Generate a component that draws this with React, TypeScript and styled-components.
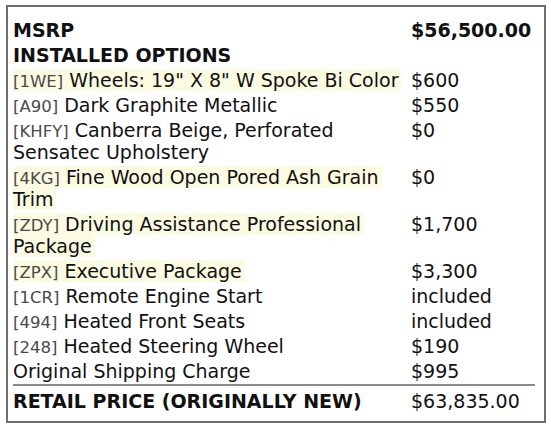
import React from 'react';
import styled, { createGlobalStyle } from 'styled-components';

interface OptionLine {
  code?: string;
  label: string;
  price: string;
  flagged?: boolean;
}

const options: OptionLine[] = [
  { code: '1WE', label: 'Wheels: 19" X 8" W Spoke Bi Color', price: '$600', flagged: true },
  { code: 'A90', label: 'Dark Graphite Metallic', price: '$550' },
  { code: 'KHFY', label: 'Canberra Beige, Perforated Sensatec Upholstery', price: '$0' },
  { code: '4KG', label: 'Fine Wood Open Pored Ash Grain Trim', price: '$0', flagged: true },
  { code: 'ZDY', label: 'Driving Assistance Professional Package', price: '$1,700', flagged: true },
  { code: 'ZPX', label: 'Executive Package', price: '$3,300', flagged: true },
  { code: '1CR', label: 'Remote Engine Start', price: 'included' },
  { code: '494', label: 'Heated Front Seats', price: 'included' },
  { code: '248', label: 'Heated Steering Wheel', price: '$190' },
  { label: 'Original Shipping Charge', price: '$995' },
];

const GlobalStyle = createGlobalStyle`
  html, body {
    margin: 0;
    padding: 0;
    background: #ffffff;
  }
  body {
    font-family: 'DejaVu Sans', 'Liberation Sans', sans-serif;
    color: #111111;
  }
`;

const Sheet = styled.div`
  box-sizing: border-box;
  width: 540px;
  margin: 5px 0 0 6px;
  border: 2px solid #6e6e6e;
  padding: 12px 9px 9px 5px;
  background: #ffffff;
`;

const PriceGrid = styled.div`
  display: grid;
  grid-template-columns: 390px 1fr;
  column-gap: 8px;
  row-gap: 3px;
  align-items: start;
  font-size: 19px;
  line-height: 22px;
`;

const Label = styled.div<{ $bold?: boolean }>`
  font-weight: ${({ $bold }) => ($bold ? 700 : 400)};
  color: #111111;
`;

const Price = styled.div<{ $bold?: boolean }>`
  font-weight: ${({ $bold }) => ($bold ? 700 : 400)};
  color: #111111;
  white-space: nowrap;
`;

const Highlight = styled.span<{ $on: boolean }>`
  background: ${({ $on }) => ($on ? '#fbfbe2' : 'transparent')};
  padding-right: ${({ $on }) => ($on ? '3px' : '0')};
  box-decoration-break: clone;
  -webkit-box-decoration-break: clone;
`;

const Code = styled.span`
  font-size: 16.5px;
  line-height: 1;
  color: #4a4a4a;
`;

const Rule = styled.div`
  grid-column: 1 / -1;
  height: 2px;
  background: #8a8a8a;
  margin: -1px 0 1px;
`;

export default function App() {
  return (
    <>
      <GlobalStyle />
      <Sheet>
        <PriceGrid>
          <Label $bold>MSRP</Label>
          <Price $bold>$56,500.00</Price>
          <Label $bold>INSTALLED OPTIONS</Label>
          <Price />
          {options.map((o) => (
            <React.Fragment key={o.label}>
              <Label>
                <Highlight $on={!!o.flagged}>
                  {o.code && <Code>[{o.code}]</Code>}
                  {o.code ? ' ' : ''}
                  {o.label}
                </Highlight>
              </Label>
              <Price>{o.price}</Price>
            </React.Fragment>
          ))}
          <Rule />
          <Label $bold>RETAIL PRICE (ORIGINALLY NEW)</Label>
          <Price>$63,835.00</Price>
        </PriceGrid>
      </Sheet>
    </>
  );
}
